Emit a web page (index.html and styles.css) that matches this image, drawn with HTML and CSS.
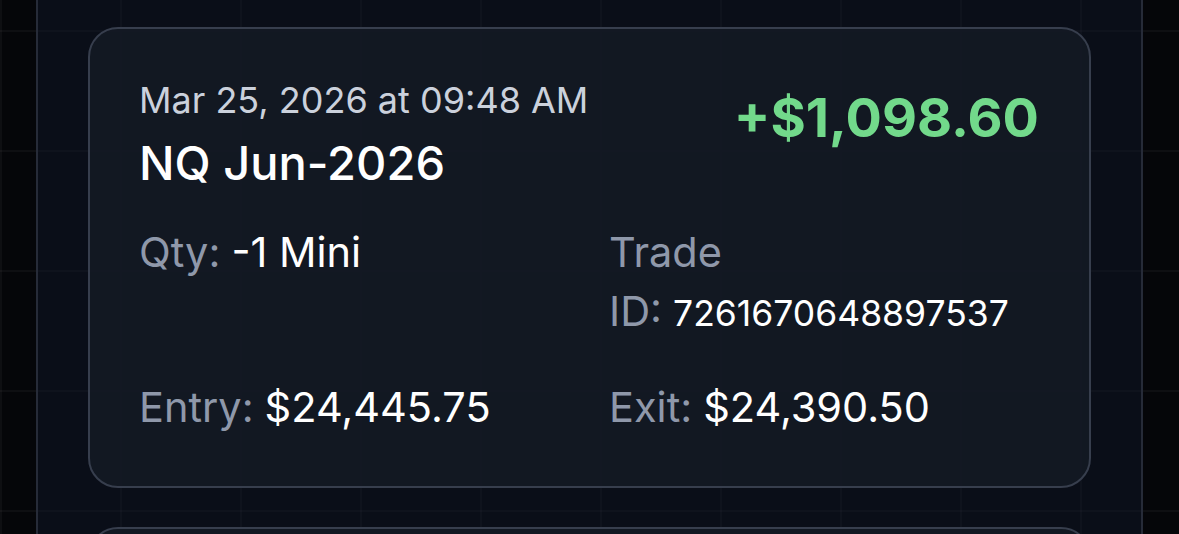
FILE: index.html
```html
<!DOCTYPE html>
<html lang='en'>
  <head>
    <meta charset='utf-8'>
    <meta name='viewport' content='width=device-width,initial-scale=1'>
    <title>Trades</title>
    <link rel='icon' href='data:,'>
    <link rel="stylesheet" href="styles.css">
  </head>

  <body>
    <main class="feed">
      <article class="trade">
        <header class="trade-head">
          <div>
            <div class="trade-time">Mar 25, 2026 at 09:48 AM</div>
            <div class="trade-symbol">NQ Jun-2026</div>
          </div>
          <div class="trade-pnl">+$1,098.60</div>
        </header>
        <div class="trade-grid">
          <div class="field"><span class="label">Qty:</span><span class="value">-1 Mini</span></div>
          <div class="field"><span class="label">Trade ID:</span><span class="value id">7261670648897537</span></div>
          <div class="field"><span class="label">Entry:</span><span class="value">$24,445.75</span></div>
          <div class="field"><span class="label">Exit:</span><span class="value">$24,390.50</span></div>
        </div>
      </article>

      <article class="trade">
        <header class="trade-head">
          <div>
            <div class="trade-time">Mar 25, 2026 at 09:31 AM</div>
            <div class="trade-symbol">NQ Jun-2026</div>
          </div>
          <div class="trade-pnl">+$412.40</div>
        </header>
        <div class="trade-grid">
          <div class="field"><span class="label">Qty:</span><span class="value">1 Mini</span></div>
          <div class="field"><span class="label">Trade ID:</span><span class="value id">7261670648897102</span></div>
          <div class="field"><span class="label">Entry:</span><span class="value">$24,410.25</span></div>
          <div class="field"><span class="label">Exit:</span><span class="value">$24,430.87</span></div>
        </div>
      </article>
    </main>
  </body>
</html>
```

FILE: styles.css
```css
/* reset/general */
* { box-sizing: border-box; }
html, body { height: 100%; }
body {
  margin: 0;
  font-family: Inter, "Noto Sans", sans-serif;
  color: #fff;
  background-color: #050609;
  background-image:
    linear-gradient(to right, rgba(255,255,255,.035) 2px, transparent 2px),
    linear-gradient(to bottom, rgba(255,255,255,.035) 2px, transparent 2px);
  background-size: 120px 120px;
  background-position: 0 30px;
  overflow: hidden;
}
/* page column */
.feed {
  width: 1107px;
  min-height: 100%;
  margin: 0 auto;
  padding: 27px 50px;
  border-left: 2px solid #262b38;
  border-right: 2px solid #262b38;
  background-color: rgba(18, 24, 44, .45);
  display: flex;
  flex-direction: column;
  gap: 39px;
}
/* trade card */
.trade {
  background: rgba(20, 25, 36, .92);
  border: 2px solid #373e4d;
  border-radius: 30px;
  padding: 47px 50px 49px 49px;
}
.trade-head { display: flex; justify-content: space-between; align-items: flex-start; }
.trade-time { font-size: 36px; line-height: 48px; color: #cbd1dc; }
.trade-symbol { font-size: 47px; line-height: 72px; font-weight: 500; margin-top: 3px; }
.trade-pnl { font-size: 54px; line-height: 84px; font-weight: 700; color: #72d98b; }
/* fields */
.trade-grid {
  display: grid;
  grid-template-columns: 1fr 1fr;
  column-gap: 40px;
  row-gap: 35px;
  margin-top: 24px;
}
.field { font-size: 41.5px; line-height: 59px; }
.label { color: #8f98aa; }
.value { margin-left: 11px; }
.value.id { font-size: 35.5px; }
```
